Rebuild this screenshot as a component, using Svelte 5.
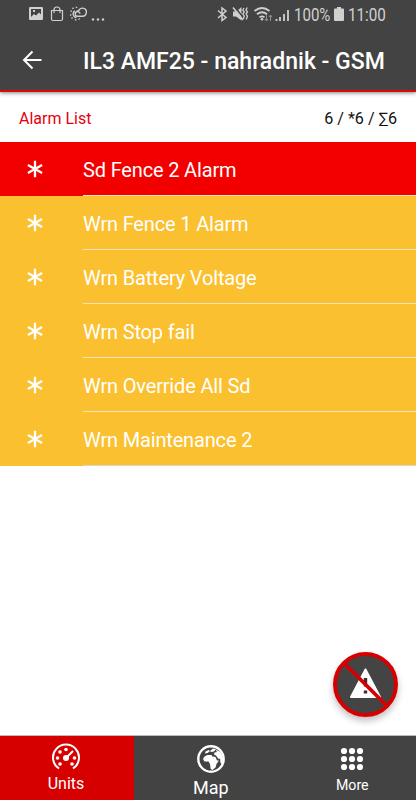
<script>
  const alarms = [
    { text: 'Sd Fence 2 Alarm', level: 'sd' },
    { text: 'Wrn Fence 1 Alarm', level: 'wrn' },
    { text: 'Wrn Battery Voltage', level: 'wrn' },
    { text: 'Wrn Stop fail', level: 'wrn' },
    { text: 'Wrn Override All Sd', level: 'wrn' },
    { text: 'Wrn Maintenance 2', level: 'wrn' }
  ];
  const dots = [4, 12, 20];
</script>

<div class="screen">
  <header>
    <div class="status">
      <svg class="left-icons" width="80" height="20" viewBox="28 4 80 20" fill="none" stroke="#d0d0d0">
        <path fill="#d0d0d0" stroke="none" fill-rule="evenodd" d="M30 7h12q1 0 1 1v11q0 1-1 1H30q-1 0-1-1V8q0-1 1-1zm1 2v8l3-3 2 1.500 3-3 2 2V9zm2 1h2v2h-2z" />
        <path stroke-width="1.200" d="M51.500 10.500h11v8.500q0 1.500-1.500 1.500h-8q-1.500 0-1.500-1.500zM54 13v-3q0-3 3-3t3 3v3" />
        <path stroke-width="1.400" d="M77.500 16.200h4.500a4 4 0 1 0-3.200-5.800q-2 .2-2.400 2M77.500 16.200a2.300 2.300 0 0 1 0-4.600q2.200 0 2.500 2" />
        <path stroke-width="1.300" d="M76.500 17.500a3.600 3.600 0 0 1-1.700-6.600" />
        <path stroke-width="1.500" d="M72.500 7.800l1 1M76.500 6.800v1.200M70.500 11l1.300.4M70 15h1.300M71.500 18.500l1-1M75.500 20.500l.3-1.300M79.500 19.500l-.6-1" />
        <g fill="#d0d0d0" stroke="none"><circle cx="93" cy="19.500" r="1.200" /><circle cx="98" cy="19.500" r="1.200" /><circle cx="103" cy="19.500" r="1.200" /></g>
      </svg>
      <svg class="right-icons" width="76" height="20" viewBox="216 4 76 20" fill="none" stroke="#d0d0d0">
        <path stroke-width="1.500" d="M218 10.500l8 7-4 3V8l4 3-8 7" />
        <path fill="#d0d0d0" stroke="none" d="M233 11.500h3.500l5-4.500v13.500L236 16.500h-3z" />
        <path stroke="#434343" stroke-width="1.500" d="M234.500 6.500l9 11.500" />
        <path stroke-width="1.600" d="M233 7.500l10 12.500" />
        <path stroke-width="1.300" d="M244 8l-1.200 2 1.500 2-1.500 2 1.500 2-1 3M247.200 7.500l-1.200 2.500 1.500 2-1.500 2 1.500 2-1.200 3.500" />
        <path stroke-width="1.800" d="M254.500 11q7.500-6 15 0M257 14.200q5-4 10 0M259.500 17.400q2.500-2 5 0" />
        <circle cx="262" cy="19.200" r="1.300" fill="#d0d0d0" stroke="none" />
        <path stroke="#909090" d="M266.500 15v6M265 19l1.500 2 1.500-2M270.500 21v-6M269 17l1.500-2 1.500 2" />
        <path stroke-width="1.800" d="M276.500 19v2M280 17v4M284 14v7M288 10v11" />
      </svg>
      <span class="pct">100%</span>
      <svg class="battery" width="10" height="14" viewBox="0 0 10 14"><path fill="#d0d0d0" d="M3 0h4v1.500h2q1 0 1 1V13q0 1-1 1H1q-1 0-1-1V2.500q0-1 1-1h2z" /></svg>
      <span class="clock">11:00</span>
    </div>
    <div class="toolbar">
      <svg width="20" height="20" viewBox="0 0 20 20" fill="none" stroke="#fff" stroke-width="2"><path d="M19.500 10H2M10.500 1.500L2 10l8.500 8.500" /></svg>
      <h1>IL3 AMF25 - nahradnik - GSM</h1>
    </div>
  </header>

  <div class="summary">
    <span class="label">Alarm List</span>
    <span class="counts">6 / *6 / ∑6</span>
  </div>

  <ul>
    {#each alarms as alarm}
      <li class={alarm.level}>
        <svg width="16" height="18" viewBox="0 0 16 18" stroke="#fff" stroke-width="2.300"><path d="M8 .8v16.400M.9 4.900l14.200 8.200M.9 13.100l14.200-8.200" /></svg>
        <span class="name">{alarm.text}</span>
      </li>
    {/each}
  </ul>

  <main>
    <button class="fab" aria-label="Silence alarms">
      <svg width="65" height="65" viewBox="0 0 65 65">
        <circle cx="32.500" cy="32.500" r="30.500" fill="#444" stroke="#d60000" stroke-width="4" />
        <path d="M32.500 17.500L47 45H18z" fill="#fff" stroke="#fff" stroke-width="2" stroke-linejoin="round" />
        <path d="M32.500 26v8.500M32.500 38.500v3" stroke="#333" stroke-width="3.400" />
        <path d="M11.500 11.500l42 42" stroke="#d60000" stroke-width="3.800" />
      </svg>
    </button>
  </main>

  <nav>
    <div class="tab active">
      <svg width="30" height="28" viewBox="0 0 30 28" fill="#fff">
        <path fill="none" stroke="#fff" stroke-width="2" d="M8 25.500a13 13 0 1 1 14 0" />
        <path stroke="#fff" stroke-width="2" d="M15 15l7-7" />
        <circle cx="15" cy="15" r="3" />
        <circle cx="15" cy="6.500" r="1.800" /><circle cx="9" cy="9" r="1.800" /><circle cx="6.500" cy="15" r="1.800" /><circle cx="9" cy="21" r="1.800" /><circle cx="21" cy="21" r="1.800" /><circle cx="23.500" cy="15" r="1.800" />
      </svg>
      <span>Units</span>
    </div>
    <div class="tab map">
      <svg width="28" height="28" viewBox="0 0 28 28">
        <circle cx="14" cy="14" r="12.700" fill="#434343" stroke="#fff" stroke-width="2.400" />
        <path fill="#fff" d="M7.500 11.500l3-1.500h4l1 1.500 3 .5 1.500 3.500h2l-2.500 3.500-1 3.500-3 2.500-1.800-1-.7-5-1.500-2.500H7.500l-1.500-2.500zM8.500 6.500l3-1.500 1.500 1-2.500 2-2.500.5zM13 6l3-2.500 3 .5-2 2.500-3 .5zM18.500 4.500l5 2.500 3 6-1.500 6-1.500-1-.5-4.500-1.500.5-2.500-3.500-2-1 .5-2 2.500-.5z" />
      </svg>
      <span>Map</span>
    </div>
    <div class="tab more">
      <svg width="24" height="24" viewBox="0 0 24 24" fill="#fff">
        {#each dots as y}{#each dots as x}<circle cx={x} cy={y} r="3.100" />{/each}{/each}
      </svg>
      <span>More</span>
    </div>
  </nav>
</div>

<style>
  :global(body) { margin: 0; }
  .screen { width: 416px; height: 800px; display: flex; flex-direction: column; background: #fff; font-family: Roboto, "Liberation Sans", sans-serif; overflow: hidden; }
  header { flex: none; box-sizing: border-box; height: 92px; background: #434343; border-bottom: 2px solid #df0808; box-shadow: 0 1px 4px rgba(0, 0, 0, .5); z-index: 1; }
  .status { height: 30px; display: flex; align-items: center; box-sizing: border-box; padding: 0 0 2px 28px; color: #d0d0d0; font-size: 17.500px; }
  .status > * { flex: none; }
  .right-icons { margin-left: 108px; }
  .pct, .clock { white-space: nowrap; transform-origin: left center; padding-top: 2px; }
  .pct { width: 38px; margin-left: 2px; transform: scaleX(.86); }
  .battery { margin-left: 2px; }
  .clock { margin-left: 4px; transform: scaleX(.87); }
  .toolbar { height: 60px; display: flex; align-items: center; padding-left: 22px; }
  h1 { margin: 2px 0 0 41px; color: #fff; font-size: 23px; font-weight: 500; white-space: nowrap; }
  .summary { flex: none; height: 50px; box-sizing: border-box; display: flex; justify-content: space-between; align-items: center; padding: 2px 19px 0 19px; font-size: 16px; }
  .label { color: #e5000c; }
  .counts { color: #111; font-size: 16.100px; }
  ul { margin: 0; padding: 0; list-style: none; }
  li { height: 54px; display: flex; align-items: center; color: #fff; font-size: 20px; letter-spacing: -.16px; }
  li svg { margin-left: 27px; }
  .sd { background: #f20000; }
  .wrn { background: #fbc02f; }
  .name { flex: 1; box-sizing: border-box; height: 54px; display: flex; align-items: center; margin-left: 40px; padding-top: 3px; border-bottom: 1px solid #f4e3bd; }
  li:last-child .name { border-color: #ddd5c6; }
  main { flex: 1; display: flex; justify-content: flex-end; align-items: flex-end; padding: 0 18px 19px 0; }
  .fab { display: block; width: 65px; height: 65px; border: 0; border-radius: 50%; padding: 0; background: none; box-shadow: 0 4px 7px rgba(0, 0, 0, .25); }
  .fab svg { display: block; }
  nav { flex: none; display: flex; height: 64px; background: #434343; box-shadow: 0 -1px 0 #bbb; }
  .tab { flex: 1; box-sizing: border-box; display: flex; flex-direction: column; align-items: center; padding-top: 7px; color: #fff; font-size: 16px; line-height: 20px; }
  .active { flex: 0 0 134px; background: #d60000; padding-right: 2px; }
  .active span { margin-top: 3px; }
  .map { padding: 9px 0 0 13px; font-size: 18px; }
  .map span { margin-top: 5px; }
  .more { padding: 11px 0 0 14px; font-size: 14.200px; }
  .more span { margin-top: 4px; }
</style>
